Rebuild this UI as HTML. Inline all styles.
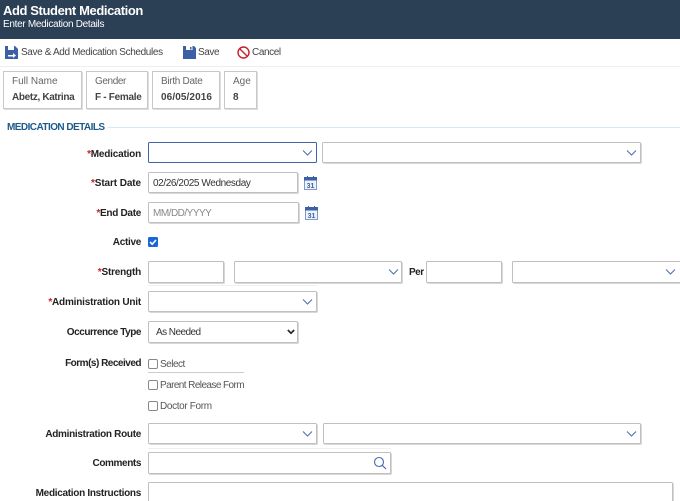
<!DOCTYPE html>
<html><head><meta charset="utf-8">
<style>
html,body{margin:0;padding:0;background:#fff}
#p{position:relative;width:680px;height:501px;overflow:hidden;background:#fff;font-family:"Liberation Sans",sans-serif;font-size:10.5px;color:#333}
#p div,#p span.a,#p svg{position:absolute}
.box{box-sizing:border-box;border:1px solid #c0c0c0;border-radius:1.5px;background:#fff;box-shadow:1px 1px 0 #d8d8d8}
.l{right:539px;text-align:right;font-weight:bold;color:#222;white-space:nowrap;font-size:10px;line-height:12px;letter-spacing:-.3px}
.l b{color:#c8202a}
.ib{box-sizing:border-box;border:1px solid #c8c8c8;box-shadow:1px 1px 0 #ddd;background:#fff}
.ib .t{left:8px;top:3px;color:#666;font-size:10px;line-height:13px;white-space:nowrap}
.ib .v{left:8px;top:18px;font-weight:bold;color:#444;font-size:10px;line-height:13px;white-space:nowrap}
.tb{color:#444;font-size:10px;line-height:12px;white-space:nowrap;top:47px}
.cb{box-sizing:border-box;width:10px;height:10px;border:1px solid #888;border-radius:2px;background:#fff;left:148px}
.ct{left:160px;color:#555;font-size:10px;line-height:12px;white-space:nowrap}
</style></head><body><div id="p">

<div style="left:0;top:0;width:680px;height:39px;background:#2b3f55"></div>
<div style="left:3px;top:3px;color:#fff;font-weight:bold;font-size:13px;line-height:16px;white-space:nowrap;letter-spacing:-.4px">Add Student Medication</div>
<div style="left:3px;top:19px;color:#fff;font-size:10px;line-height:12px;white-space:nowrap;letter-spacing:-.3px">Enter Medication Details</div>

<svg style="left:5px;top:46px" width="13" height="13" viewBox="0 0 13 13"><path d="M0 0H10L13 3V13H0Z" fill="#3c5fa6"/><rect x="3" y="0" width="6" height="4" fill="#fff"/><path d="M3 9H8V7L11 9.5L8 12V10.5H3Z" fill="#fff"/></svg>
<div class="tb" style="left:21px;letter-spacing:-.36px">Save &amp; Add Medication Schedules</div>
<svg style="left:183px;top:46px" width="13" height="13" viewBox="0 0 13 13"><path d="M0 0H11L13 2V13H0Z" fill="#3c5fa6"/><rect x="3" y="0" width="6.5" height="4" fill="#fff"/><rect x="7" y="1" width="1.5" height="2.5" fill="#3c5fa6"/></svg>
<div class="tb" style="left:198px;letter-spacing:-.4px">Save</div>
<svg style="left:237px;top:46px" width="13" height="13" viewBox="0 0 13 13"><circle cx="6.5" cy="6.5" r="5.5" fill="none" stroke="#c8202a" stroke-width="1.4"/><path d="M2.6 2.6L10.4 10.4" stroke="#c8202a" stroke-width="1.4"/></svg>
<div class="tb" style="left:252px;letter-spacing:-.4px">Cancel</div>
<div style="left:0;top:66px;width:680px;height:1px;background:#eee"></div>

<div class="ib" style="left:3px;top:71px;width:79px;height:38px"><div class="t">Full Name</div><div class="v" style="top:19px;letter-spacing:-.35px">Abetz, Katrina</div></div>
<div class="ib" style="left:86px;top:71px;width:62px;height:38px"><div class="t" style="letter-spacing:-.4px">Gender</div><div class="v" style="top:19px;letter-spacing:-.3px">F - Female</div></div>
<div class="ib" style="left:152px;top:71px;width:68px;height:38px"><div class="t" style="letter-spacing:-.3px">Birth Date</div><div class="v" style="top:19px;letter-spacing:.1px">06/05/2016</div></div>
<div class="ib" style="left:224px;top:71px;width:33px;height:38px"><div class="t">Age</div><div class="v" style="top:19px">8</div></div>

<div style="left:7px;top:122px;color:#1d5a8a;font-weight:bold;font-size:10px;line-height:12px;white-space:nowrap;letter-spacing:-.55px">MEDICATION DETAILS</div>
<div style="left:108px;top:127px;width:572px;height:1px;background:#d6e8f5"></div>

<div class="l" style="top:149px;letter-spacing:-.2px"><b>*</b>Medication</div>
<div class="box" style="left:148px;top:142px;width:169px;height:21px;border-color:#3f63a8;box-shadow:none"></div>
<svg style="left:302px;top:150px" width="11" height="6"><path d="M1 .5L5.5 5L10 .5" fill="none" stroke="#4a6cb0"/></svg>
<div class="box" style="left:322px;top:142px;width:319px;height:21px"></div>
<svg style="left:626px;top:150px" width="11" height="6"><path d="M1 .5L5.5 5L10 .5" fill="none" stroke="#4a6cb0"/></svg>

<div class="l" style="top:178px;letter-spacing:-.1px"><b>*</b>Start Date</div>
<div class="box" style="left:148px;top:172px;width:150px;height:21px"></div>
<div style="left:153px;top:178px;font-size:10px;line-height:12px;color:#333;white-space:nowrap;letter-spacing:-.4px">02/26/2025 Wednesday</div>
<svg style="left:304px;top:176px" width="13" height="14" viewBox="0 0 13 14"><rect x=".5" y="1.5" width="12" height="12" fill="#eef3fa" stroke="#7d9ac8"/><rect x="0" y="1" width="13" height="3.5" fill="#3c5fa6"/><rect x="3" y="0" width="1" height="2" fill="#3c5fa6"/><rect x="9" y="0" width="1" height="2" fill="#3c5fa6"/><text x="6.5" y="12" text-anchor="middle" font-size="7" font-weight="bold" fill="#3c5fa6" font-family="Liberation Sans">31</text></svg>

<div class="l" style="top:208px"><b>*</b>End Date</div>
<div class="box" style="left:148px;top:202px;width:151px;height:21px"></div>
<div style="left:153px;top:208px;font-size:10px;line-height:12px;color:#888;white-space:nowrap;letter-spacing:-.5px">MM/DD/YYYY</div>
<svg style="left:305px;top:206px" width="13" height="14" viewBox="0 0 13 14"><rect x=".5" y="1.5" width="12" height="12" fill="#eef3fa" stroke="#7d9ac8"/><rect x="0" y="1" width="13" height="3.5" fill="#3c5fa6"/><rect x="3" y="0" width="1" height="2" fill="#3c5fa6"/><rect x="9" y="0" width="1" height="2" fill="#3c5fa6"/><text x="6.5" y="12" text-anchor="middle" font-size="7" font-weight="bold" fill="#3c5fa6" font-family="Liberation Sans">31</text></svg>

<div class="l" style="top:237px">Active</div>
<svg style="left:148px;top:237px" width="10" height="10" viewBox="0 0 10 10"><rect width="10" height="10" rx="1.5" fill="#1a66d6"/><path d="M2 5L4.2 7.2L8 3" fill="none" stroke="#fff" stroke-width="1.6"/></svg>

<div class="l" style="top:267px;letter-spacing:-.2px"><b>*</b>Strength</div>
<div class="box" style="left:148px;top:261px;width:76px;height:22px"></div>
<div class="box" style="left:234px;top:261px;width:168px;height:22px"></div>
<svg style="left:388px;top:269px" width="11" height="6"><path d="M1 .5L5.5 5L10 .5" fill="none" stroke="#4a6cb0"/></svg>
<div style="left:409px;top:267px;font-weight:bold;color:#222;font-size:10px;line-height:12px;letter-spacing:-.5px">Per</div>
<div class="box" style="left:426px;top:261px;width:76px;height:22px"></div>
<div class="box" style="left:512px;top:261px;width:180px;height:22px"></div>
<svg style="left:665px;top:269px" width="11" height="6"><path d="M1 .5L5.5 5L10 .5" fill="none" stroke="#4a6cb0"/></svg>
<div style="left:148px;top:285px;width:169px;height:1px;background:#f0f0f0"></div>

<div class="l" style="top:297px;letter-spacing:-.2px"><b>*</b>Administration Unit</div>
<div class="box" style="left:148px;top:291px;width:169px;height:21px"></div>
<svg style="left:302px;top:299px" width="11" height="6"><path d="M1 .5L5.5 5L10 .5" fill="none" stroke="#4a6cb0"/></svg>

<div class="l" style="top:327px;letter-spacing:-.45px">Occurrence Type</div>
<div class="box" style="left:148px;top:321px;width:150px;height:22px"></div>
<div style="left:156px;top:327px;font-size:10px;line-height:12px;color:#333;white-space:nowrap;letter-spacing:-.55px">As Needed</div>
<svg style="left:287px;top:329px" width="8" height="6"><path d="M.8 1L4 4.2L7.2 1" fill="none" stroke="#222" stroke-width="1.6"/></svg>

<div class="l" style="top:358px;letter-spacing:-.5px">Form(s) Received</div>
<div class="cb" style="top:359px"></div>
<div class="ct" style="top:359px;letter-spacing:-.5px">Select</div>
<div style="left:148px;top:372px;width:96px;height:1px;background:#ccc"></div>
<div class="cb" style="top:380px"></div>
<div class="ct" style="top:380px;letter-spacing:-.58px">Parent Release Form</div>
<div class="cb" style="top:401px"></div>
<div class="ct" style="top:401px;letter-spacing:-.35px">Doctor Form</div>

<div class="l" style="top:429px">Administration Route</div>
<div class="box" style="left:148px;top:423px;width:169px;height:21px"></div>
<svg style="left:302px;top:431px" width="11" height="6"><path d="M1 .5L5.5 5L10 .5" fill="none" stroke="#4a6cb0"/></svg>
<div class="box" style="left:323px;top:423px;width:318px;height:21px"></div>
<svg style="left:626px;top:431px" width="11" height="6"><path d="M1 .5L5.5 5L10 .5" fill="none" stroke="#4a6cb0"/></svg>
<div style="left:148px;top:448px;width:243px;height:1px;background:#f0f0f0"></div>

<div class="l" style="top:458px;letter-spacing:-.4px">Comments</div>
<div class="box" style="left:148px;top:452px;width:243px;height:22px"></div>
<svg style="left:373px;top:456px" width="14" height="14" viewBox="0 0 14 14"><circle cx="6" cy="6" r="4.5" fill="none" stroke="#4a6cb0" stroke-width="1.1"/><path d="M9.3 9.3L13 13" stroke="#4a6cb0" stroke-width="1.2"/></svg>

<div class="l" style="top:488px">Medication Instructions</div>
<div class="box" style="left:148px;top:482px;width:525px;height:40px"></div>
</div></body></html>
